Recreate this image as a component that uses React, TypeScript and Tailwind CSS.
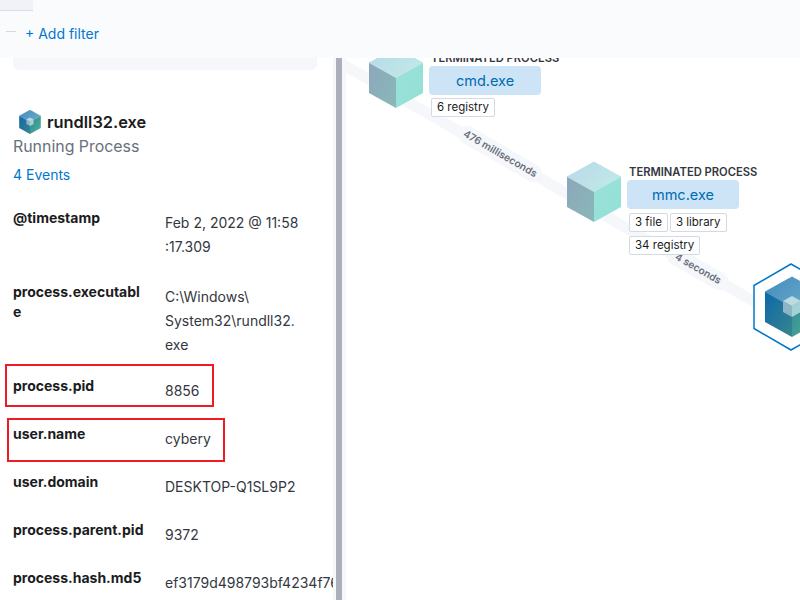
import React from "react";

const rows: { label: string[]; value: string[]; space: string }[] = [
  { label: ["@timestamp"], value: ["Feb 2, 2022 @ 11:58", ":17.309"], space: "pb-[21px]" },
  { label: ["process.executabl", "e"], value: ["C:\\Windows\\", "System32\\rundll32.", "exe"], space: "pb-[17px]" },
  { label: ["process.pid"], value: ["8856"], space: "pb-[19px]" },
  { label: ["user.name"], value: ["cybery"], space: "pb-[19px]" },
  { label: ["user.domain"], value: ["DESKTOP-Q1SL9P2"], space: "pb-[19px]" },
  { label: ["process.parent.pid"], value: ["9372"], space: "pb-[19px]" },
  { label: ["process.hash.md5"], value: ["ef3179d498793bf4234f76"], space: "pb-[19px]" },
];

function Cube({ x, y, id, kind }: { x: number; y: number; id: string; kind: "light" | "dark" }) {
  const dark = kind === "dark";
  return (
    <g transform={`translate(${x} ${y})`}>
      <defs>
        <linearGradient id={`${id}-top`} x1="0" y1="0" x2="1" y2="0.6">
          <stop offset="0" stopColor={dark ? "#3f8bc0" : "#b9d8e8"} />
          <stop offset="1" stopColor={dark ? "#6aa9c6" : "#c0e8e8"} />
        </linearGradient>
        <linearGradient id={`${id}-left`} x1="0" y1="0" x2="1" y2="1">
          <stop offset="0" stopColor={dark ? "#0f68a8" : "#8ea6bb"} />
          <stop offset="1" stopColor={dark ? "#37858f" : "#88b9b8"} />
        </linearGradient>
        <linearGradient id={`${id}-right`} x1="0" y1="0" x2="1" y2="1">
          <stop offset="0" stopColor={dark ? "#30868f" : "#98e2da"} />
          <stop offset="1" stopColor={dark ? "#4fb39c" : "#94dfd6"} />
        </linearGradient>
      </defs>
      <path d="M27 0 L54 15 L27 30 L0 15 Z" fill={`url(#${id}-top)`} stroke={`url(#${id}-top)`} strokeLinejoin="round" />
      <path d="M0 15 L27 30 L27 60 L0 45 Z" fill={`url(#${id}-left)`} />
      <path d="M54 15 L27 30 L27 60 L54 45 Z" fill={`url(#${id}-right)`} />
      {dark && (
        <g>
          <path d="M27 19 L36 24 L27 29 L18 24 Z" fill="#bcdbe0" />
          <path d="M18 24 L27 29 L27 40 L18 35 Z" fill="#8fb4c4" />
          <path d="M36 24 L27 29 L27 40 L36 35 Z" fill="#a2d2d6" />
        </g>
      )}
    </g>
  );
}

function Badge({ children }: { children: React.ReactNode }) {
  return (
    <span className="h-[19px] px-[5px] flex items-center bg-white border border-[#d3dae6] rounded-[2px] text-[11.5px] text-[#1a1c21] whitespace-nowrap">
      {children}
    </span>
  );
}

export default function App() {
  return (
    <div className="relative w-[800px] h-[600px] overflow-hidden flex flex-col bg-white font-['Inter',sans-serif]">
      {/* top bar */}
      <div className="relative z-10 h-[58px] shrink-0 bg-[#fafbfd]">
        <div className="w-[33px] h-[11px] bg-[#f0f2f7] border-b border-[#d8dcea]" />
        <div className="flex items-center h-[47px] pl-[6px]">
          <div className="w-[10px] h-px bg-[#d3dae6] mt-[-7px]" />
          <span className="ml-[9px] mt-[-2px] text-[14px] text-[#0077cc]">+ Add filter</span>
        </div>
      </div>

      <div className="flex flex-1 min-h-0">
        {/* details panel */}
        <aside className="w-[333px] shrink-0 overflow-hidden px-[13px]">
          <div className="w-[304px] h-[12px] bg-[#f5f7fa] rounded-b-[6px]" />
          <div className="flex items-center mt-[40px] pl-[6px] h-[24px] gap-[6px]">
            <svg width="22" height="24" viewBox="0 0 54 60">
              <Cube x={0} y={0} id="title" kind="dark" />
            </svg>
            <span className="text-[16.4px] font-semibold text-[#1a1c21]">rundll32.exe</span>
          </div>
          <div className="mt-[1px] text-[15.9px] leading-[24px] text-[#69707d]">Running Process</div>
          <div className="mt-[4px] text-[14px] leading-[24px] text-[#0077cc]">4 Events</div>
          <div className="mt-[19px] flex flex-col">
            {rows.map((row) => (
              <div key={row.label[0]} className={`flex ${row.space}`}>
                <div className="w-[152px] shrink-0 pt-[2px] text-[14px] leading-[20px] font-bold text-[#1a1c21]">
                  {row.label.map((l) => (
                    <div key={l}>{l}</div>
                  ))}
                </div>
                <div className="pt-[5px] text-[14px] leading-[24px] text-[#343741] whitespace-nowrap">
                  {row.value.map((v) => (
                    <div key={v}>{v}</div>
                  ))}
                </div>
              </div>
            ))}
          </div>
        </aside>

        {/* splitter */}
        <div className="w-[3px] shrink-0 bg-[#f5f7fa]" />
        <div className="w-[6px] shrink-0 bg-[#acafba]" />
        <div className="w-[4px] shrink-0 bg-[#f5f7fa]" />

        {/* process graph */}
        <main className="relative flex-1 overflow-hidden">
          <svg className="absolute left-0 top-0" width="454" height="542" viewBox="346 58 454 542">
            <line x1="330" y1="57" x2="800" y2="328" stroke="#f5f7fa" strokeWidth="11" />
            <Cube x={369} y={48} id="cmd" kind="light" />
            <Cube x={567} y={162} id="mmc" kind="light" />
            <path d="M791 264 L828 285.5 L828 328.5 L791 350 L754 328.5 L754 285.5 Z" fill="#fff" stroke="#0077cc" strokeWidth="1.5" strokeLinejoin="round" />
            <Cube x={765} y={277} id="run" kind="dark" />
          </svg>

          <div className="absolute left-[107px] top-[87px] w-[94px] h-[18px] flex items-center justify-center rounded-full bg-[#f5f7fa] rotate-[30deg] text-[10.2px] font-semibold text-[#69707d] whitespace-nowrap">
            476 milliseconds
          </div>
          <div className="absolute left-[318px] top-[202px] w-[68px] h-[18px] flex items-center justify-center rounded-full bg-[#f5f7fa] rotate-[30deg] text-[10.2px] font-semibold text-[#69707d] whitespace-nowrap">
            4 seconds
          </div>

          <div className="absolute left-[83px] top-[-7px] w-[130px] flex flex-col">
            <div className="pl-[2px] h-[15px] leading-[15px] text-[11.2px] font-semibold text-[#343741] whitespace-nowrap">TERMINATED PROCESS</div>
            <div className="w-[112px] h-[29px] flex items-center justify-center rounded-[4px] bg-[#cce4f5] text-[14.5px] text-[#006bb4]">cmd.exe</div>
            <div className="mt-[3px] ml-[2px] flex gap-[2px]">
              <Badge>6 registry</Badge>
            </div>
          </div>

          <div className="absolute left-[281px] top-[107px] w-[150px] flex flex-col">
            <div className="pl-[2px] h-[15px] leading-[15px] text-[11.2px] font-semibold text-[#343741] whitespace-nowrap">TERMINATED PROCESS</div>
            <div className="w-[112px] h-[29px] flex items-center justify-center rounded-[4px] bg-[#cce4f5] text-[14.5px] text-[#006bb4]">mmc.exe</div>
            <div className="mt-[4px] ml-[2px] flex flex-wrap gap-x-[2px] gap-y-[4px] w-[105px]">
              <Badge>3 file</Badge>
              <Badge>3 library</Badge>
              <Badge>34 registry</Badge>
            </div>
          </div>
        </main>
      </div>

      {/* annotations drawn over the screenshot */}
      <div className="absolute left-[5px] top-[364px] w-[209px] h-[43px] border-2 border-[#ed1c24]" />
      <div className="absolute left-[7px] top-[418px] w-[218px] h-[44px] border-2 border-[#ed1c24]" />
    </div>
  );
}
